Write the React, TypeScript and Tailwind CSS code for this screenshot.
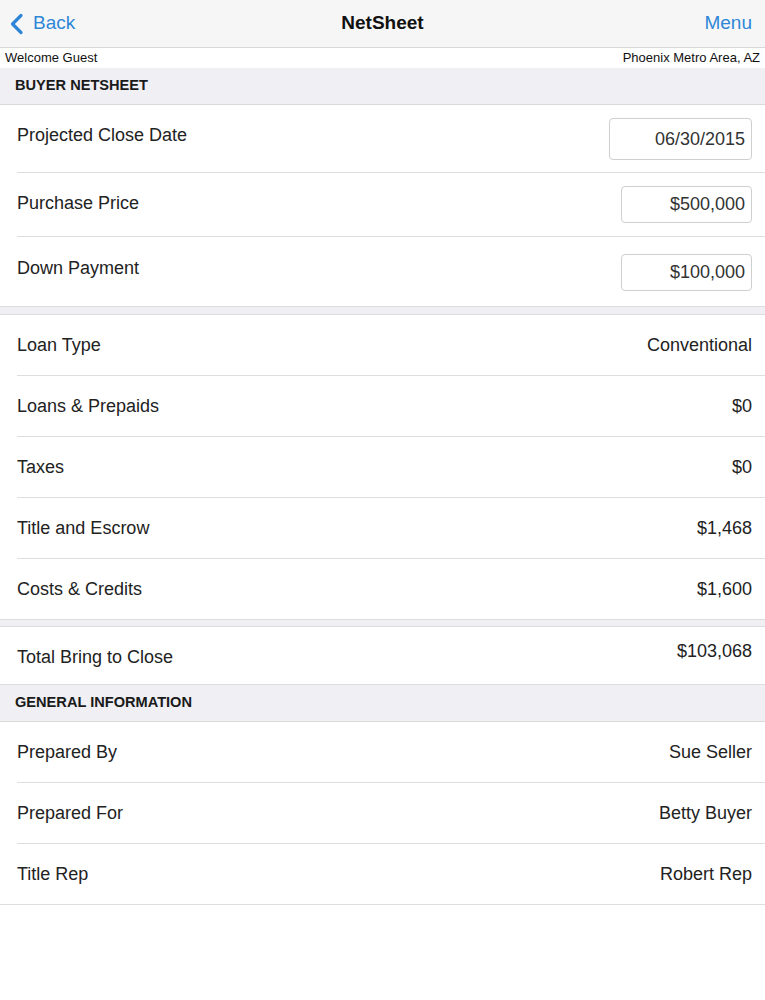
const font = { fontFamily: '"Liberation Sans", Arial, sans-serif' };

type Row = { label: string; value: string };

const costRows: Row[] = [
  { label: 'Loan Type', value: 'Conventional' },
  { label: 'Loans & Prepaids', value: '$0' },
  { label: 'Taxes', value: '$0' },
  { label: 'Title and Escrow', value: '$1,468' },
  { label: 'Costs & Credits', value: '$1,600' },
];

const infoRows: Row[] = [
  { label: 'Prepared By', value: 'Sue Seller' },
  { label: 'Prepared For', value: 'Betty Buyer' },
  { label: 'Title Rep', value: 'Robert Rep' },
];

function Separator() {
  return <div className="ml-[17px] h-px bg-[#dedede]" />;
}

function Band({ h }: { h: string }) {
  return <div className={`${h} bg-[#efeff4] border-y border-[#dcdcdc]`} />;
}

function SectionHeader({ title }: { title: string }) {
  return (
    <div className="h-[37px] flex items-center pl-[15px] bg-[#efeff4] border-b border-[#d9d9d9]">
      <span className="text-[14.6px] font-bold text-[#1a1a1a]">{title}</span>
    </div>
  );
}

function ValueRow({ row, last }: { row: Row; last?: boolean }) {
  return (
    <>
      <div className="h-[60px] flex items-center justify-between pl-[17px] pr-[13px] text-[18px] text-[#222]">
        <span>{row.label}</span>
        <span>{row.value}</span>
      </div>
      {!last && <Separator />}
    </>
  );
}

export default function App() {
  return (
    <div className="w-[765px] min-h-[1000px] bg-white" style={font}>
      {/* Nav bar */}
      <div className="h-[48px] relative flex items-center justify-between bg-[#f6f6f7] border-b border-[#d8d8da]">
        <div className="flex items-center pl-[9px] gap-[9px] text-[#2f86d6]">
          <svg width="15" height="22" viewBox="0 0 15 22" fill="none">
            <path d="M12 2.5 L3.5 11 L12 19.5" stroke="#2f86d6" strokeWidth="3.2" strokeLinecap="round" strokeLinejoin="round" />
          </svg>
          <span className="text-[19px]">Back</span>
        </div>
        <span className="absolute left-1/2 -translate-x-1/2 text-[19px] font-bold text-[#111]">NetSheet</span>
        <span className="pr-[13px] text-[19px] text-[#2f86d6]">Menu</span>
      </div>

      {/* Welcome */}
      <div className="h-[20px] flex items-center justify-between pl-[5px] pr-[5px] text-[13px] text-[#111]">
        <span>Welcome Guest</span>
        <span>Phoenix Metro Area, AZ</span>
      </div>

      <SectionHeader title="BUYER NETSHEET" />

      {/* Input rows */}
      <div className="h-[67px] flex justify-between pl-[17px] pr-[13px] text-[18px] text-[#222]">
        <span className="mt-[17px]">Projected Close Date</span>
        <div className="mt-[13px] w-[143px] h-[42px] border border-[#cfcfcf] rounded-[4px] flex items-center justify-end pr-[6px] text-[#333]">
          06/30/2015
        </div>
      </div>
      <Separator />
      <div className="h-[63px] flex justify-between pl-[17px] pr-[13px] text-[18px] text-[#222]">
        <span className="mt-[17px]">Purchase Price</span>
        <div className="mt-[13px] w-[131px] h-[37px] border border-[#cfcfcf] rounded-[4px] flex items-center justify-end pr-[6px] text-[#333]">
          $500,000
        </div>
      </div>
      <Separator />
      <div className="h-[69px] flex justify-between pl-[17px] pr-[13px] text-[18px] text-[#222]">
        <span className="mt-[18px]">Down Payment</span>
        <div className="mt-[17px] w-[131px] h-[37px] border border-[#cfcfcf] rounded-[4px] flex items-center justify-end pr-[6px] text-[#333]">
          $100,000
        </div>
      </div>

      <Band h="h-[9px]" />

      {costRows.map((r, i) => (
        <ValueRow key={r.label} row={r} last={i === costRows.length - 1} />
      ))}

      <Band h="h-[8px]" />

      {/* Total */}
      <div className="h-[57px] flex justify-between pl-[17px] pr-[13px] text-[18px] text-[#222]">
        <span className="mt-[17px]">Total Bring to Close</span>
        <span className="mt-[11px]">$103,068</span>
      </div>

      <div className="border-t border-[#dcdcdc]">
        <SectionHeader title="GENERAL INFORMATION" />
      </div>

      {infoRows.map((r, i) => (
        <ValueRow key={r.label} row={r} last={i === infoRows.length - 1} />
      ))}
      <div className="h-px bg-[#dedede]" />
    </div>
  );
}
